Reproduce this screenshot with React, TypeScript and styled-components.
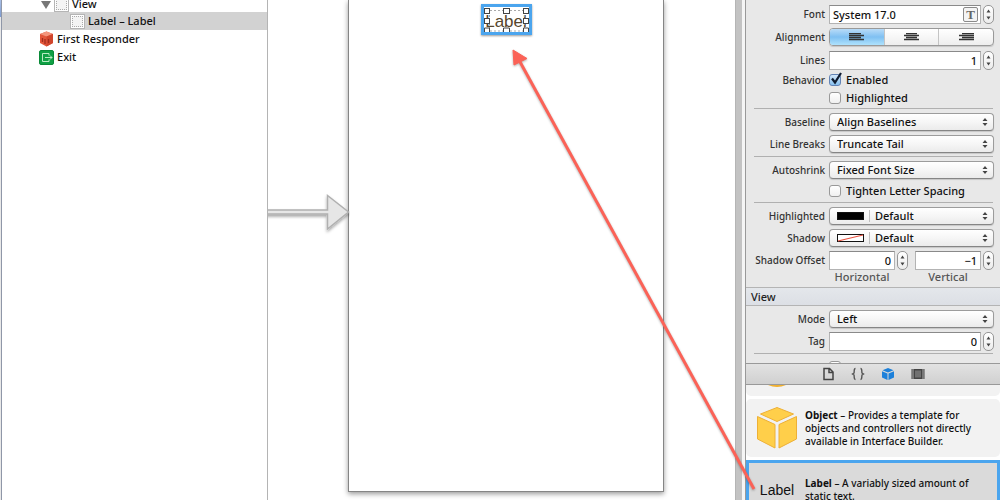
import React from "react";
import styled, { createGlobalStyle, css } from "styled-components";

const GlobalStyle = createGlobalStyle`
  *, *::before, *::after { box-sizing: border-box; }
  body { margin: 0; }
  button, input, select { font: inherit; color: inherit; margin: 0; }
`;

const Workspace = styled.div`
  position: relative;
  display: flex;
  height: 100vh;
  overflow: hidden;
  background: #fff;
  color: #111;
  font: 500 11px/14px "Lucida Grande", "Noto Sans", sans-serif;
`;

/* ---------- document outline ---------- */

const WindowEdge = styled.div`
  flex: 0 0 1px;
  background: linear-gradient(#a9bfe6, #7d9bd0 17px, #e8e8e8 17px);
`;

const Outline = styled.nav`
  flex: 0 0 267px;
  border-left: 1px solid #8f97a8;
  border-right: 1px solid #b4b4b4;
`;

const OutlineList = styled.ul`
  list-style: none;
  margin: 0;
  padding: 0;
`;

const OutlineItem = styled.li<{ $indent: number; $selected?: boolean; $short?: boolean }>`
  display: flex;
  gap: 3px;
  height: ${(p) => (p.$short ? 12 : 18)}px;
  align-items: ${(p) => (p.$short ? "flex-end" : "center")};
  padding-left: ${(p) => p.$indent}px;
  background: ${(p) => (p.$selected ? "#d2d2d2" : "transparent")};
`;

const Disclosure = styled.button`
  display: flex;
  align-items: center;
  width: 10px;
  height: 15px;
  padding: 0;
  border: 0;
  background: none;
`;

const OutlineTitle = styled.span<{ $raised?: boolean }>`
  padding-bottom: ${(p) => (p.$raised ? 1 : 0)}px;
`;

const ViewIcon = styled.span`
  flex: none;
  width: 15px;
  height: 15px;
  padding: 1px;
  border: 1px solid #b5b5b5;
  background: #fff;
  &::before {
    content: "";
    display: block;
    height: 100%;
    border: 1px dotted #aaa;
    background: #f4f4f4;
  }
`;

/* ---------- canvas ---------- */

const Canvas = styled.main`
  flex: 1;
  display: flex;
  min-width: 0;
  padding: 0 71px 8px 0;
`;

const EntryArrow = styled.svg`
  flex: none;
  width: 82px;
  height: 50px;
  margin: 188px -2px 0 0;
  z-index: 1;
`;

const Screen = styled.section`
  flex: 1;
  display: flex;
  justify-content: center;
  align-items: flex-start;
  border: 1px solid #858585;
  border-top: 0;
  box-shadow: 0 2px 5px rgba(0, 0, 0, 0.4);
  background: #fff;
  padding-top: 4px;
`;

const SelectedLabel = styled.div`
  position: relative;
  width: 51px;
  height: 31px;
  border: 3px solid #4ba5ee;
  box-shadow: 0 1px 2px rgba(0, 0, 0, 0.4);
  font: 17px/29px "Liberation Sans", Arial, sans-serif;
  color: #57462c;
  text-align: center;
`;

const Handles = styled.svg`
  position: absolute;
  inset: 0;
  width: 45px;
  height: 25px;
`;

const DragArrow = styled.svg`
  position: absolute;
  left: 505px;
  top: 40px;
  width: 260px;
  height: 460px;
  z-index: 3;
  pointer-events: none;
  filter: drop-shadow(0 1px 1px rgba(0, 0, 0, 0.3));
`;

const Splitter = styled.div`
  flex: 0 0 11px;
  border-left: 1px solid #b5b5b5;
  border-right: 1px solid #999;
  background: linear-gradient(90deg, #c3c3c3 0 6px, #f5f5f5 6px);
`;

/* ---------- inspector ---------- */

const Utilities = styled.aside`
  flex: 0 0 254px;
  display: flex;
  flex-direction: column;
  min-width: 0;
  background: #e8e8e8;
`;

const Inspector = styled.form`
  flex: 1;
  min-height: 0;
  overflow: hidden;
  padding-top: 3px;
`;

const Group = styled.div`
  display: flex;
  flex-direction: column;
  padding: 0 6px 0 0;
`;

const Divider = styled.hr`
  width: auto;
  height: 1px;
  margin: 1px 7px 2px 8px;
  border: 0;
  background: #b0b0b0;
`;

const Row = styled.div<{ $height?: number }>`
  display: grid;
  grid-template-columns: 79px 1fr;
  column-gap: 4px;
  align-items: center;
  height: ${(p) => p.$height ?? 22}px;
`;

const labelText = css`
  font-size: 10px;
  text-align: right;
  color: #333;
  white-space: nowrap;
`;
const FieldLabel = styled.label`
  ${labelText}
`;
const FieldHeading = styled.span`
  ${labelText}
`;

const Controls = styled.div`
  display: flex;
  align-items: center;
  gap: 2px;
  min-width: 0;
`;

const OffsetControls = styled.div`
  display: grid;
  grid-template-columns: 1fr 1fr;
  column-gap: 7px;
`;

const FieldBox = styled.div`
  position: relative;
  display: flex;
  flex: 1;
  min-width: 0;
`;

const TextField = styled.input<{ $numeric?: boolean }>`
  width: 100%;
  height: 19px;
  padding: 0 3px;
  border: 1px solid #b3b3b3;
  border-top-color: #8a8a8a;
  border-radius: 0;
  background: #fff;
  text-align: ${(p) => (p.$numeric ? "right" : "left")};
  outline: 0;
`;

const FontButton = styled.button`
  position: absolute;
  right: 3px;
  top: 2px;
  width: 15px;
  height: 15px;
  padding: 0;
  border: 1px solid #8a8a8a;
  border-radius: 2px;
  background: #f4f4f4;
  color: #666;
  font: bold 13px/13px "Liberation Serif", serif;
`;

const StepperButton = styled.button`
  flex: none;
  display: flex;
  width: 11px;
  height: 19px;
  padding: 0;
  border: 1px solid #969696;
  border-radius: 5px;
  background: linear-gradient(#fff, #ececec);
`;

const PopUp = styled.div`
  position: relative;
  flex: 1;
  min-width: 0;
`;

const PopUpSelect = styled.select<{ $swatch?: boolean }>`
  display: block;
  appearance: none;
  width: 100%;
  height: 18px;
  padding: 0 16px 0 ${(p) => (p.$swatch ? 45 : 7)}px;
  border: 1px solid #9c9c9c;
  border-bottom-color: #858585;
  border-radius: 4px;
  background: linear-gradient(#fff, #f6f6f6 50%, #ebebeb);
  box-shadow: 0 1px 1px rgba(0, 0, 0, 0.15);
`;

const PopUpArrows = styled.svg`
  position: absolute;
  right: 6px;
  top: 5px;
  width: 6px;
  height: 8px;
  pointer-events: none;
`;

const Swatch = styled.svg`
  position: absolute;
  left: 8px;
  top: 2px;
  width: 34px;
  height: 14px;
  pointer-events: none;
`;

const Segmented = styled.div`
  display: flex;
  flex: 1;
  height: 18px;
  border: 1px solid #999;
  border-radius: 4px;
  overflow: hidden;
  background: linear-gradient(#fff, #eee);
  box-shadow: 0 1px 1px rgba(0, 0, 0, 0.15);
`;

const Segment = styled.button<{ $on?: boolean }>`
  flex: 1;
  display: flex;
  align-items: center;
  justify-content: center;
  padding: 0;
  border: 0;
  border-right: 1px solid #c4c4c4;
  background: ${(p) => (p.$on ? "linear-gradient(#b9dcf8, #7fc0f2 50%, #aee2fd)" : "none")};
  &:last-child { border-right: 0; }
`;

const CheckLabel = styled.label`
  display: flex;
  align-items: center;
  gap: 5px;
  white-space: nowrap;
`;

const CheckWrap = styled.span`
  position: relative;
  display: flex;
  width: 12px;
  height: 12px;
`;

const CheckInput = styled.input`
  appearance: none;
  width: 12px;
  height: 12px;
  border: 1px solid #999;
  border-radius: 3px;
  background: linear-gradient(#fff, #f0f0f0);
  &:checked {
    border-color: #6283b5;
    background: linear-gradient(#d4e8fa, #86c0f0);
  }
`;

const CheckMark = styled.svg`
  position: absolute;
  left: 1px;
  bottom: 1px;
  width: 13px;
  height: 13px;
  pointer-events: none;
`;

const Captions = styled(OffsetControls)`
  height: 12px;
  margin-left: 83px;
  line-height: 12px;
  color: #555;
`;

const Caption = styled.span`
  padding-right: 13px;
  text-align: center;
`;

const SectionHeader = styled.h2`
  height: 19px;
  margin: 4px 0 2px;
  padding: 0 5px;
  border: solid #b4b4b4;
  border-width: 1px 0;
  background: linear-gradient(#e4e7eb, #dcdfe5);
  font-size: 11px;
  font-weight: 500;
  line-height: 17px;
  color: #222;
`;

/* ---------- library ---------- */

const LibraryTabs = styled.div`
  flex: none;
  display: flex;
  align-items: center;
  justify-content: center;
  gap: 14px;
  height: 22px;
  border: solid #999;
  border-width: 1px 0;
  background: linear-gradient(#e2e2e2, #d0d0d0);
`;

const LibraryTab = styled.button`
  display: flex;
  width: 16px;
  height: 16px;
  padding: 1px;
  border: 0;
  background: none;
`;

const Library = styled.ul`
  flex: 0 0 115px;
  overflow: hidden;
  display: flex;
  flex-direction: column;
  gap: 3px;
  margin: 0;
  padding: 0;
  list-style: none;
  background: #fff;
`;

const LibraryItem = styled.li<{ $selected?: boolean; $height: number }>`
  flex: none;
  display: grid;
  grid-template-columns: 42px 1fr;
  column-gap: 7px;
  align-items: center;
  height: ${(p) => p.$height}px;
  padding: 0 10px;
  border-radius: ${(p) => (p.$selected ? 0 : 5)}px;
  background: ${(p) => (p.$selected ? "#dadada" : "#f2f2f2")};
  ${(p) => p.$selected && css`
    padding: 0 7px;
    border: 3px solid #4ba5ee;
  `}
`;

const Description = styled.p`
  margin: 0;
  font-size: 10px;
  line-height: 13px;
  color: #111;
`;

const LabelGlyph = styled.span`
  justify-self: center;
  font: 14px/16px "Liberation Sans", Arial, sans-serif;
`;

const PeekedItem = styled.li`
  flex: none;
  display: flex;
  align-items: flex-start;
  height: 11px;
  padding-left: 22px;
  border-radius: 0 0 5px 5px;
  background: #f2f2f2;
`;

/* ---------- parts ---------- */

function Stepper({ label }: { label: string }) {
  return (
    <StepperButton type="button" aria-label={label}>
      <svg width="9" height="17" viewBox="0 0 9 17" fill="#444">
        <path d="M4.5 3.5 6.500 6.500h-4zM4.500 13.500 6.500 10.500h-4z" />
      </svg>
    </StepperButton>
  );
}

function Select({ id, value, swatch }: { id: string; value: string; swatch?: "solid" | "none" }) {
  return (
    <PopUp>
      <PopUpSelect id={id} $swatch={!!swatch} defaultValue={value}>
        <option>{value}</option>
      </PopUpSelect>
      {swatch && (
        <Swatch viewBox="0 0 34 14">
          <rect x=".5" y="3.5" width="26" height="7" fill={swatch === "solid" ? "#000" : "#fff"} stroke="#111" />
          {swatch === "none" && <path d="M1 10 26 4" stroke="#e8503e" strokeWidth="1.2" />}
          <path d="M32.500 1v12" stroke="#c0c0c0" />
        </Swatch>
      )}
      <PopUpArrows viewBox="0 0 6 8" fill="#444">
        <path d="M3 0 5.500 3h-5zM3 8 5.500 5h-5z" />
      </PopUpArrows>
    </PopUp>
  );
}

function SelectRow(props: { id: string; label: string; value: string; swatch?: "solid" | "none" }) {
  return (
    <Row>
      <FieldLabel htmlFor={props.id}>{props.label}</FieldLabel>
      <Select id={props.id} value={props.value} swatch={props.swatch} />
    </Row>
  );
}

function NumberRow({ id, label, value }: { id: string; label: string; value: string }) {
  return (
    <Row>
      <FieldLabel htmlFor={id}>{label}</FieldLabel>
      <Controls>
        <FieldBox><TextField id={id} $numeric defaultValue={value} /></FieldBox>
        <Stepper label={`${label} stepper`} />
      </Controls>
    </Row>
  );
}

function Check({ label, checked }: { label: string; checked?: boolean }) {
  return (
    <CheckLabel>
      <CheckWrap>
        <CheckInput type="checkbox" defaultChecked={checked} />
        {checked && (
          <CheckMark viewBox="0 0 13 13" fill="none" stroke="#101c30" strokeWidth="2.200">
            <path d="M2 6.500 5 10.500 11 1" />
          </CheckMark>
        )}
      </CheckWrap>
      {label}
    </CheckLabel>
  );
}

function AlignGlyph({ lines }: { lines: string }) {
  return (
    <svg width="15" height="8" viewBox="0 0 15 8" stroke="#333" strokeWidth="1.300">
      <path d={lines} />
    </svg>
  );
}

export default function App() {
  return (
    <Workspace>
      <GlobalStyle />
      <WindowEdge />
      <Outline aria-label="Document outline">
        <OutlineList>
          <OutlineItem $indent={39} $short>
            <Disclosure aria-label="Collapse View">
              <svg width="10" height="9" viewBox="0 0 10 9"><path d="M0 1h10L5 9z" fill="#777" /></svg>
            </Disclosure>
            <ViewIcon />
            <OutlineTitle $raised>View</OutlineTitle>
          </OutlineItem>
          <OutlineItem $indent={68} $selected>
            <ViewIcon />
            <OutlineTitle>Label – Label</OutlineTitle>
          </OutlineItem>
          <OutlineItem $indent={37}>
            <svg width="15" height="16" viewBox="0 0 15 16">
              <path d="M7.500.5 14 3v9l-6.500 3.500L1 12V3z" fill="#e2563a" />
              <path d="M7.500.5 14 3 7.500 5.500 1 3z" fill="#f3957c" />
              <path d="M7.500 5.500V15.500L14 12V3z" fill="#d0452c" />
              <path d="M3.500 7v4M6 8v5M9.500 8v4" stroke="#a02c1c" strokeWidth="1.300" />
            </svg>
            <OutlineTitle>First Responder</OutlineTitle>
          </OutlineItem>
          <OutlineItem $indent={37}>
            <svg width="15" height="15" viewBox="0 0 15 15" fill="none" stroke="#b9ecc4">
              <rect x=".5" y=".5" width="14" height="14" rx="1.500" fill="#0fa044" stroke="#0a8a38" />
              <path d="M10 5.500v-2H3.500v8H10v-2M6 7.500h7M11 5.500l2 2-2 2" />
            </svg>
            <OutlineTitle>Exit</OutlineTitle>
          </OutlineItem>
        </OutlineList>
      </Outline>

      <Canvas>
        <EntryArrow viewBox="0 0 82 50">
          <defs>
            <filter id="soft" x="-20%" y="-20%" width="140%" height="150%">
              <feDropShadow dx="0" dy="2" stdDeviation="1.500" floodOpacity=".35" />
            </filter>
          </defs>
          <path
            d="M-2 22H59.500V7.500L80.500 24 59.500 41V26H-2z"
            fill="#e6e6e6" stroke="#b0b0b0" strokeWidth="1.500" filter="url(#soft)"
          />
        </EntryArrow>
        <Screen aria-label="View">
          <SelectedLabel>
            Label
            <Handles viewBox="0 0 45 25" fill="#fff" stroke="#444">
              <path d="M6 3.500H40M6 24H40" stroke="#aaa" strokeDasharray="2 2" />
              <path d="M5.500 4V24M40.500 4V24" stroke="#999" strokeDasharray="2 2" />
              <rect x=".5" y="1.500" width="5" height="5" />
              <rect x="19.500" y="1.500" width="6" height="5" />
              <rect x="39.500" y="1.500" width="5" height="5" />
              <rect x=".5" y="11.500" width="5" height="5" />
              <rect x="39.500" y="11.500" width="5" height="5" />
              <path d="M.5 25v-4h5v4M19.500 25v-4h6v4M39.500 25v-4h5v4" />
            </Handles>
          </SelectedLabel>
        </Screen>
      </Canvas>

      <Splitter />

      <Utilities>
        <Inspector>
          <Group>
            <Row>
              <FieldLabel htmlFor="font">Font</FieldLabel>
              <Controls>
                <FieldBox>
                  <TextField id="font" defaultValue="System 17.0" />
                  <FontButton type="button" aria-label="Choose font">T</FontButton>
                </FieldBox>
                <Stepper label="Font size stepper" />
              </Controls>
            </Row>
            <Row $height={24}>
              <FieldHeading>Alignment</FieldHeading>
              <Segmented>
                <Segment type="button" $on aria-label="Left">
                  <AlignGlyph lines="M0 .5h12M0 2.500h15M0 4.500h12M0 6.500h15" />
                </Segment>
                <Segment type="button" aria-label="Center">
                  <AlignGlyph lines="M2 .5h11M0 2.500h15M2 4.500h11M0 6.500h15" />
                </Segment>
                <Segment type="button" aria-label="Right">
                  <AlignGlyph lines="M3 .5h12M0 2.500h15M3 4.500h12M0 6.500h15" />
                </Segment>
              </Segmented>
            </Row>
            <NumberRow id="lines" label="Lines" value="1" />
            <Row $height={18}>
              <FieldHeading>Behavior</FieldHeading>
              <Check label="Enabled" checked />
            </Row>
            <Row $height={18}>
              <span />
              <Check label="Highlighted" />
            </Row>
          </Group>
          <Divider />
          <Group>
            <SelectRow id="baseline" label="Baseline" value="Align Baselines" />
            <SelectRow id="breaks" label="Line Breaks" value="Truncate Tail" />
          </Group>
          <Divider />
          <Group>
            <SelectRow id="autoshrink" label="Autoshrink" value="Fixed Font Size" />
            <Row $height={20}>
              <span />
              <Check label="Tighten Letter Spacing" />
            </Row>
          </Group>
          <Divider />
          <Group>
            <SelectRow id="highlighted" label="Highlighted" value="Default" swatch="solid" />
            <SelectRow id="shadow" label="Shadow" value="Default" swatch="none" />
            <Row>
              <FieldHeading>Shadow Offset</FieldHeading>
              <OffsetControls>
                <Controls>
                  <FieldBox><TextField $numeric aria-label="Horizontal shadow offset" defaultValue="0" /></FieldBox>
                  <Stepper label="Horizontal stepper" />
                </Controls>
                <Controls>
                  <FieldBox><TextField $numeric aria-label="Vertical shadow offset" defaultValue="−1" /></FieldBox>
                  <Stepper label="Vertical stepper" />
                </Controls>
              </OffsetControls>
            </Row>
            <Captions>
              <Caption>Horizontal</Caption>
              <Caption>Vertical</Caption>
            </Captions>
          </Group>
          <SectionHeader>View</SectionHeader>
          <Group>
            <SelectRow id="mode" label="Mode" value="Left" />
            <NumberRow id="tag" label="Tag" value="0" />
          </Group>
          <Divider />
          <Group>
            <Row>
              <span />
              <CheckWrap><CheckInput type="checkbox" aria-label="User interaction" /></CheckWrap>
            </Row>
          </Group>
        </Inspector>

        <LibraryTabs>
          <LibraryTab aria-label="File templates">
            <svg width="14" height="14" viewBox="0 0 14 14" fill="none" stroke="#444" strokeWidth="1.500">
              <path d="M3 1.500h5.500L12 5v7.500H3zM8 2v3.500H12" />
            </svg>
          </LibraryTab>
          <LibraryTab aria-label="Code snippets">
            <svg width="14" height="14" viewBox="0 0 14 14" fill="none" stroke="#555" strokeWidth="1.400">
              <path d="M4.500 1.500C2.500 1.500 3.500 5 3 6L1.500 7 3 8c.5 1-.5 4.500 1.500 4.500M9.500 1.500C11.500 1.500 10.500 5 11 6l1.500 1L11 8c-.5 1 .5 4.500-1.500 4.500" />
            </svg>
          </LibraryTab>
          <LibraryTab aria-label="Objects">
            <svg width="14" height="14" viewBox="0 0 14 14" fill="#1c80da">
              <path d="M7 1 12.500 3.200 7 5.500 1.500 3.200zM1 4.300l5.500 2.300V13L1 10.500zM13 4.300 7.500 6.600V13l5.500-2.500z" />
            </svg>
          </LibraryTab>
          <LibraryTab aria-label="Media">
            <svg width="14" height="14" viewBox="0 0 14 14">
              <path d="M.5 2h13v10H.5z" fill="#444" />
              <path d="M2 2.500v9M12 2.500v9" stroke="#ccc" strokeWidth="1.500" strokeDasharray="1 1" />
              <path d="M4 3.500h6v7H4z" fill="#707070" />
            </svg>
          </LibraryTab>
        </LibraryTabs>

        <Library>
          <PeekedItem>
            <svg width="18" height="3" viewBox="0 0 18 3"><path d="M0 0h18Q9 4 0 0z" fill="#f0b030" /></svg>
          </PeekedItem>
          <LibraryItem $height={58}>
            <svg width="42" height="44" viewBox="0 0 42 44" fill="#ffcf4a" stroke="#eeb035">
              <path d="M21 1.500 37.500 8 21 15.500 4.500 8z" />
              <path d="M1.500 10.500 19 18.500V42L1.500 33z" />
              <path d="M40.500 10.500 23 18.500V42l17.500-9z" />
            </svg>
            <Description>
              <b>Object</b> – Provides a template for objects and controllers not directly available in Interface Builder.
            </Description>
          </LibraryItem>
          <LibraryItem $height={60} $selected>
            <LabelGlyph>Label</LabelGlyph>
            <Description>
              <b>Label</b> – A variably sized amount of static text.
            </Description>
          </LibraryItem>
        </Library>
      </Utilities>

      <DragArrow viewBox="0 0 260 460">
        <path d="M14 20 249 449" stroke="#fb6257" strokeWidth="3" />
        <path d="M8 10 22 18.500 9 25z" fill="#fb6257" stroke="#fb6257" />
      </DragArrow>
    </Workspace>
  );
}
